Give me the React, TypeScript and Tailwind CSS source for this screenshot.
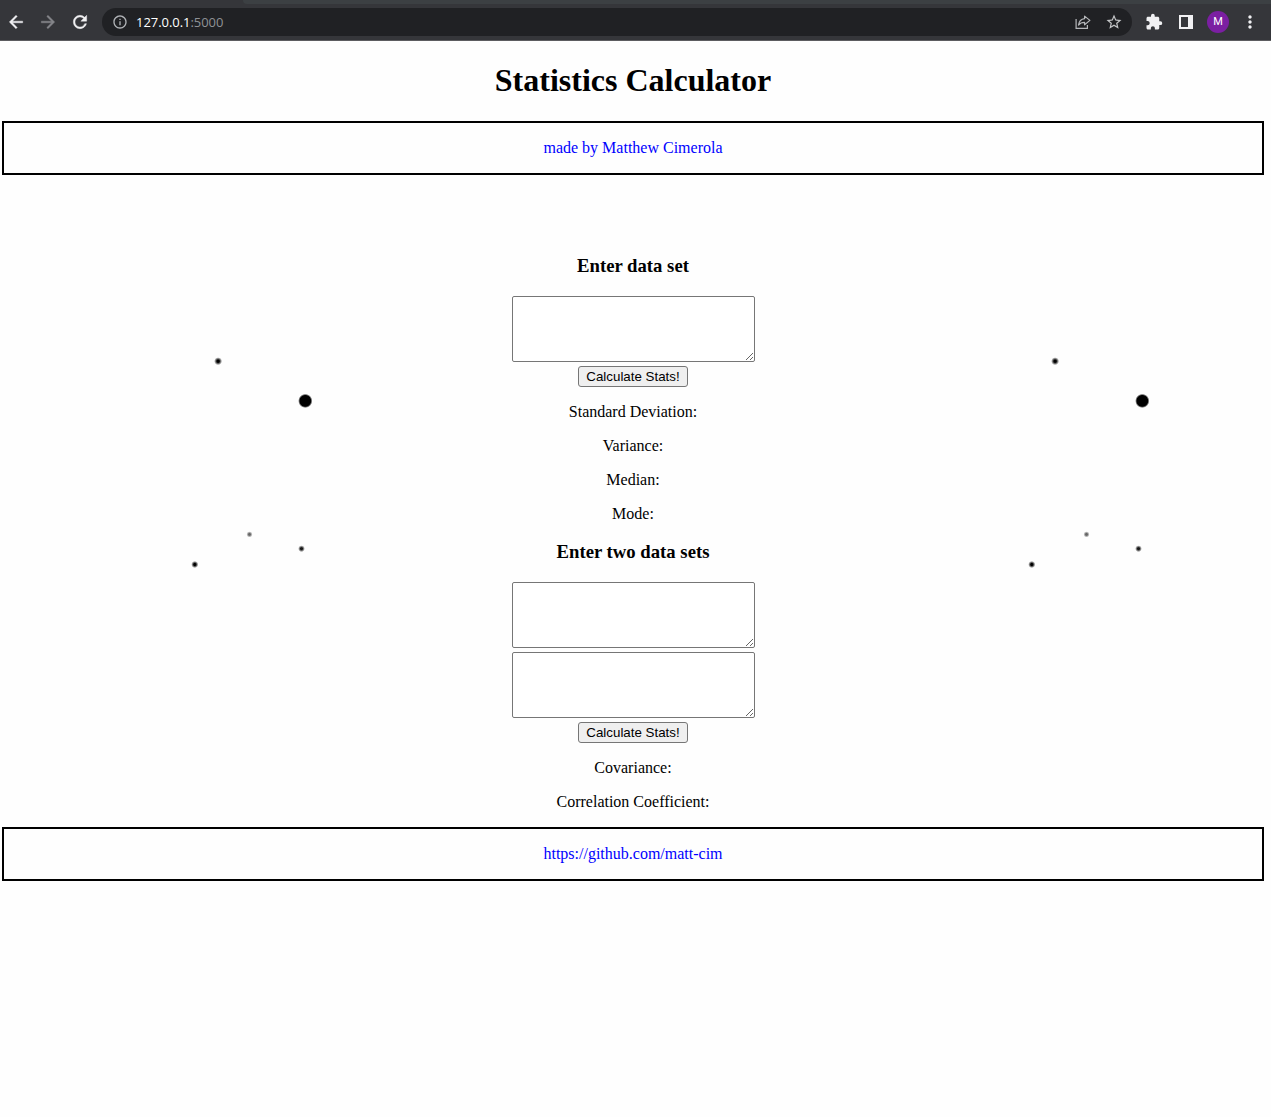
import React from "react";
import {
  MdArrowBack,
  MdArrowForward,
  MdExtension,
  MdInfoOutline,
  MdMoreVert,
  MdRefresh,
  MdStarBorder,
} from "react-icons/md";

function BrowserBar() {
  return (
    <header className="flex h-[41px] flex-col border-b border-[#5c5d60] bg-[#35363a]">
      <div className="flex h-1 shrink-0 justify-end">
        <div className="w-[1028px] rounded-bl-[5px] bg-[#3c4043]" />
      </div>
      <div className="flex h-9 items-center pl-[6px]">
        <MdArrowBack className="size-5 shrink-0 stroke-[#f1f1f3] stroke-[0.5] text-[#f1f1f3] [&>path:first-child]:stroke-none" />
        <MdArrowForward className="ml-3 size-5 shrink-0 stroke-[#85868a] stroke-[0.5] text-[#85868a] [&>path:first-child]:stroke-none" />
        <MdRefresh className="ml-3 size-5 shrink-0 stroke-[#f1f1f3] stroke-[0.5] text-[#f1f1f3] [&>path:first-child]:stroke-none" />
        <div className="ml-3 flex h-7 w-[1030px] shrink-0 items-center rounded-full bg-[#202124] pr-[9px] pl-[10px]">
          <MdInfoOutline className="size-4 text-[#b0b3b7]" />
          <p className="ml-2 pt-px font-['Open_Sans',sans-serif] text-[13px] tracking-[-0.05px] text-[#8f9296]">
            <span className="text-white">127.0.0.1</span>:5000
          </p>
          <svg
            viewBox="0 0 16 16"
            className="ml-auto size-4 fill-none stroke-[#b5b7ba] stroke-[1.2]"
          >
            <path d="M1.1 5v9.4h11.3V11" />
            <path
              d="M9.6 2.1 14.9 6.4 9.6 10.8V8.4C6.7 8.4 5 9.1 3.5 11.1 4 7.6 6 5 9.6 4.6Z"
              strokeLinejoin="round"
            />
          </svg>
          <MdStarBorder className="ml-[14px] size-[18px] text-[#c4c6c8]" />
        </div>
        <MdExtension className="ml-[13px] size-[18px] shrink-0 text-[#f1f1f3]" />
        <div className="ml-4 h-[14px] w-[14px] shrink-0 border-2 border-r-[5px] border-[#f1f1f3]" />
        <div className="ml-[14px] flex size-[22px] shrink-0 items-center justify-center rounded-full bg-[#7b1fa2] pt-px font-['Roboto',sans-serif] text-[11px] text-white">
          M
        </div>
        <MdMoreVert className="ml-[11px] size-5 shrink-0 text-[#f1f1f3]" />
      </div>
    </header>
  );
}

function DotSphere({ id }: { id: string }) {
  const small = `url(#${id}-small)`;
  const large = `url(#${id}-large)`;
  return (
    <svg viewBox="0 0 425 425" className="mt-[113px] size-[425px]">
      <defs>
        <radialGradient id={`${id}-small`}>
          <stop offset="0.3" />
          <stop offset="1" stopOpacity="0" />
        </radialGradient>
        <radialGradient id={`${id}-large`}>
          <stop offset="0.75" />
          <stop offset="1" stopOpacity="0" />
        </radialGradient>
      </defs>
      <circle cx="216.1" cy="73.2" r="4" fill={small} />
      <circle cx="303.3" cy="112.9" r="7.2" fill={large} />
      <circle cx="247.5" cy="246.4" r="3.1" fill={small} opacity=".6" />
      <circle cx="299.5" cy="260.7" r="3.4" fill={small} opacity=".9" />
      <circle cx="192.8" cy="276.5" r="3.6" fill={small} />
    </svg>
  );
}

function DataInput({ label }: { label: string }) {
  return (
    <textarea
      aria-label={label}
      className="mb-1 block h-[66px] w-[243px] resize rounded-[2px] border border-[#767676] bg-white p-0.5"
    />
  );
}

function CalculateButton() {
  return (
    <button className="h-[21px] w-[110px] rounded-[3px] border border-[#767676] bg-[#efefef] font-['Liberation_Sans',sans-serif] text-[13.333px] leading-[15px] whitespace-nowrap">
      Calculate Stats!
    </button>
  );
}

function Results({ labels }: { labels: string[] }) {
  return (
    <div className="mt-4 flex flex-col items-center gap-4">
      {labels.map((label) => (
        <p key={label} className="leading-[18px]">
          {label}
        </p>
      ))}
    </div>
  );
}

function LinkBox({ children }: { children: React.ReactNode }) {
  return (
    <div className="flex h-[54px] items-center justify-center border-2 border-black">
      <a href="#" className="text-[#0000ff]">
        {children}
      </a>
    </div>
  );
}

export default function App() {
  return (
    <div className="h-[1117px] w-[1271px] overflow-hidden bg-[#fefefe] font-['Liberation_Serif',serif] text-base text-black">
      <BrowserBar />
      <main className="ml-0.5 w-[1262px]">
        <h1 className="pt-[21px] pb-[23px] text-center text-[32px] leading-9 font-bold">
          Statistics Calculator
        </h1>
        <LinkBox>made by Matthew Cimerola</LinkBox>
        <div className="flex h-[652px] justify-between">
          <DotSphere id="left" />
          <section className="flex w-[412px] flex-col items-center pt-20">
            <h3 className="mb-5 text-[18.72px] leading-[21px] font-bold">Enter data set</h3>
            <DataInput label="Data set" />
            <CalculateButton />
            <Results labels={["Standard Deviation:", "Variance:", "Median:", "Mode:"]} />
            <h3 className="mt-[18px] mb-5 text-[18.72px] leading-[21px] font-bold">
              Enter two data sets
            </h3>
            <DataInput label="First data set" />
            <DataInput label="Second data set" />
            <CalculateButton />
            <Results labels={["Covariance:", "Correlation Coefficient:"]} />
          </section>
          <DotSphere id="right" />
        </div>
        <LinkBox>https://github.com/matt-cim</LinkBox>
      </main>
    </div>
  );
}
